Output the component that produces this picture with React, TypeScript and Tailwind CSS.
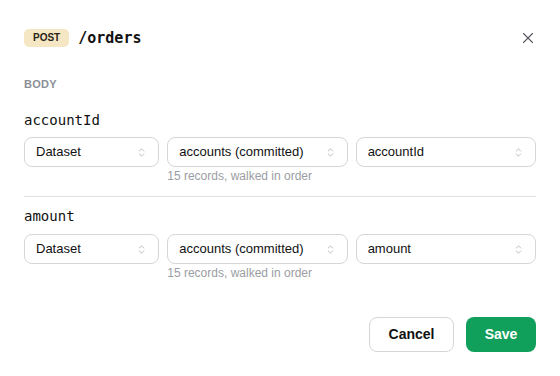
import React from 'react';
import { X, ChevronsUpDown } from 'lucide-react';

const fields = [
  { name: 'accountId', source: 'Dataset', dataset: 'accounts (committed)', column: 'accountId' },
  { name: 'amount', source: 'Dataset', dataset: 'accounts (committed)', column: 'amount' },
];

const Select = ({ value }: { value: string }) => (
  <div className="flex h-[30px] items-center justify-between rounded-lg border border-[#d4d6da] bg-white pl-[11px] pr-[11px] text-[13px] text-[#111]">
    <span>{value}</span>
    <ChevronsUpDown size={11} strokeWidth={1.5} className="text-[#9ca0a6]" />
  </div>
);

const App = () => {
  return (
    <div
      className="h-[376px] w-[560px] bg-white px-6 pt-6"
      style={{ fontFamily: '"Liberation Sans", Arial, sans-serif' }}
    >
      {/* Header */}
      <div className="flex h-7 items-center justify-between">
        <div className="flex items-center gap-[9px]">
          <span className="rounded-[5px] bg-[#f6e7c4] px-[9px] py-[3px] text-[10px] font-bold leading-3 text-[#2a2418]">
            POST
          </span>
          <span className="font-['DejaVu_Sans_Mono',monospace] text-[15px] font-bold text-[#111]">
            /orders
          </span>
        </div>
        <button className="-mr-px text-[#55585e]">
          <X size={18} strokeWidth={1.5} />
        </button>
      </div>

      <div className="mt-6 text-[11px] font-bold leading-4 tracking-wide text-[#8b8f96]">BODY</div>

      <div className="mt-[18px]">
        {fields.map((f, i) => (
          <div key={f.name} className={i > 0 ? 'mt-[9px]' : ''}>
            <div className="font-['DejaVu_Sans_Mono',monospace] text-[14px] leading-5 text-[#111]">
              {f.name}
            </div>
            <div className={`${i > 0 ? 'mt-2' : 'mt-[7px]'} grid grid-cols-[3fr_4fr_4fr] gap-2`}>
              <Select value={f.source} />
              <div>
                <Select value={f.dataset} />
                <div className="mt-px text-[12px] leading-4 text-[#9a9da3]">15 records, walked in order</div>
              </div>
              <Select value={f.column} />
            </div>
            {i < fields.length - 1 && <div className="mt-3 h-px bg-[#dfe1e4]" />}
          </div>
        ))}
      </div>

      <div className="mt-9 flex justify-end gap-3">
        <button className="h-[35px] w-[85px] rounded-lg border border-[#d4d6da] bg-white text-[14px] font-bold text-[#111]">
          Cancel
        </button>
        <button className="h-[35px] w-[70px] rounded-lg bg-[#11a05c] text-[14px] font-bold text-white">
          Save
        </button>
      </div>
    </div>
  );
};

export default App;
